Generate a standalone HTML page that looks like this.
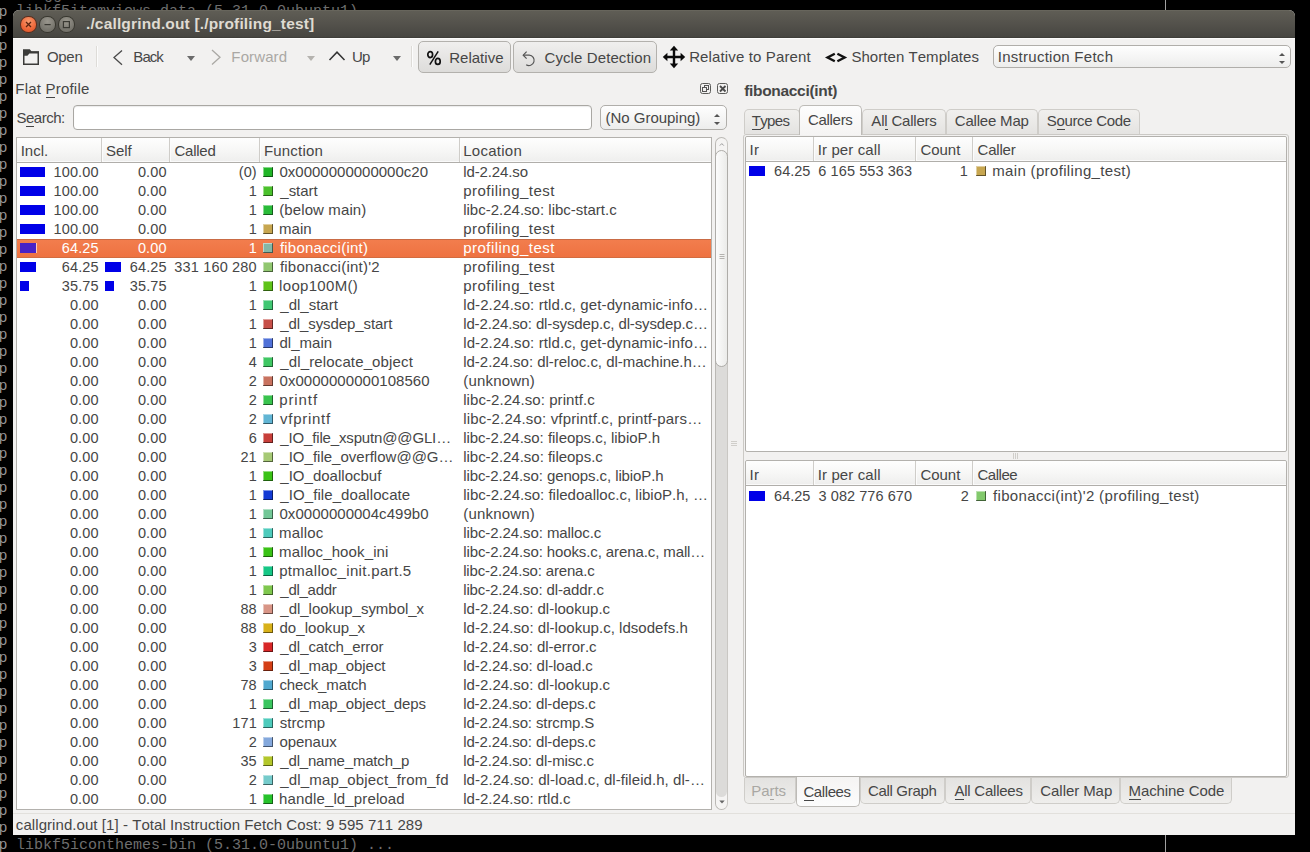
<!DOCTYPE html>
<html><head><meta charset="utf-8"><title>callgrind</title>
<style>
*{box-sizing:border-box;margin:0;padding:0}
html,body{width:1310px;height:852px;overflow:hidden;background:#000}
body{font-family:"Liberation Sans",sans-serif;font-size:15px;color:#464646;position:relative;font-kerning:none}
.abs,.t{position:absolute;white-space:nowrap}
.t{line-height:20px;height:20px}
.term{position:absolute;font-family:"Liberation Mono",monospace;color:#6e6e6e;font-size:15px;line-height:17px;white-space:pre}
#win{position:absolute;left:13px;top:10px;width:1282px;height:825px;background:#f2f1f0;border-radius:6px 6px 0 0;overflow:hidden}
#title{position:absolute;left:0;top:0;width:100%;height:28px;background:linear-gradient(#5f5d55 0%,#53514b 50%,#474641 94%,#3b3a36 100%);border-top:1px solid #67655c;box-shadow:0 1px 0 #fbfbfa}
.hdr{position:absolute;background:linear-gradient(#fefefe 0%,#f7f7f6 50%,#eeeeed 100%);border-bottom:1px solid #b0aeaa;box-shadow:inset 0 -1px 0 #fafafa}
.sep{position:absolute;width:1px;background:#cfcdc9;box-shadow:1px 0 0 #fcfcfc}
.frame{position:absolute;background:#fff;border:1px solid #b3b1ad;border-radius:2px}
.sq{position:absolute;width:10px;height:10px;box-shadow:inset -1px -1px 0 rgba(0,0,0,.5), inset 1px 1px 0 rgba(255,255,255,.45)}
.bar{position:absolute;height:10px;background:#0000e8}
.tab{position:absolute;border:1px solid #cfcdc9;border-bottom:none;background:linear-gradient(#f1f0ee,#e4e3e1);border-radius:5px 5px 0 0}
.tabb{position:absolute;border:1px solid #cfcdc9;border-top:none;background:linear-gradient(#e3e2e0,#efeeec);border-radius:0 0 5px 5px}
.btn{position:absolute;border:1px solid #b3b1ad;border-radius:5px;background:linear-gradient(#f0efee,#dddcda)}
.combo{position:absolute;border:1px solid #b0aeaa;border-radius:5px;background:linear-gradient(#fefefe,#ededec)}
.tri{position:absolute;width:0;height:0;border-left:4px solid transparent;border-right:4px solid transparent}
svg{position:absolute;overflow:visible}
</style></head><body>

<div class="term" style="left:16px;top:3px">libkf5itemviews-data (5.31.0-0ubuntu1)</div>
<div class="term" style="left:44px;top:-13px">gg</div>
<div class="term" style="left:16px;top:837px">libkf5iconthemes-bin (5.31.0-0ubuntu1) ...</div>
<div class="term" style="left:-1.5px;top:4px;color:#969696">p</div>
<div class="term" style="left:-1.5px;top:21px;color:#969696">p</div>
<div class="term" style="left:-1.5px;top:38px;color:#969696">p</div>
<div class="term" style="left:-1.5px;top:55px;color:#969696">p</div>
<div class="term" style="left:-1.5px;top:72px;color:#969696">p</div>
<div class="term" style="left:-1.5px;top:89px;color:#969696">p</div>
<div class="term" style="left:-1.5px;top:106px;color:#969696">p</div>
<div class="term" style="left:-1.5px;top:123px;color:#969696">p</div>
<div class="term" style="left:-1.5px;top:140px;color:#969696">p</div>
<div class="term" style="left:-1.5px;top:157px;color:#969696">p</div>
<div class="term" style="left:-1.5px;top:174px;color:#969696">p</div>
<div class="term" style="left:-1.5px;top:191px;color:#969696">p</div>
<div class="term" style="left:-1.5px;top:208px;color:#969696">p</div>
<div class="term" style="left:-1.5px;top:225px;color:#969696">p</div>
<div class="term" style="left:-1.5px;top:242px;color:#969696">p</div>
<div class="term" style="left:-1.5px;top:259px;color:#969696">p</div>
<div class="term" style="left:-1.5px;top:276px;color:#969696">p</div>
<div class="term" style="left:-1.5px;top:293px;color:#969696">p</div>
<div class="term" style="left:-1.5px;top:310px;color:#969696">p</div>
<div class="term" style="left:-1.5px;top:327px;color:#969696">p</div>
<div class="term" style="left:-1.5px;top:344px;color:#969696">p</div>
<div class="term" style="left:-1.5px;top:361px;color:#969696">p</div>
<div class="term" style="left:-1.5px;top:378px;color:#969696">p</div>
<div class="term" style="left:-1.5px;top:395px;color:#969696">p</div>
<div class="term" style="left:-1.5px;top:412px;color:#969696">p</div>
<div class="term" style="left:-1.5px;top:429px;color:#969696">p</div>
<div class="term" style="left:-1.5px;top:446px;color:#969696">p</div>
<div class="term" style="left:-1.5px;top:463px;color:#969696">p</div>
<div class="term" style="left:-1.5px;top:480px;color:#969696">p</div>
<div class="term" style="left:-1.5px;top:497px;color:#969696">p</div>
<div class="term" style="left:-1.5px;top:514px;color:#969696">p</div>
<div class="term" style="left:-1.5px;top:531px;color:#969696">p</div>
<div class="term" style="left:-1.5px;top:548px;color:#969696">p</div>
<div class="term" style="left:-1.5px;top:565px;color:#969696">p</div>
<div class="term" style="left:-1.5px;top:582px;color:#969696">p</div>
<div class="term" style="left:-1.5px;top:599px;color:#969696">p</div>
<div class="term" style="left:-1.5px;top:616px;color:#969696">p</div>
<div class="term" style="left:-1.5px;top:633px;color:#969696">p</div>
<div class="term" style="left:-1.5px;top:650px;color:#969696">p</div>
<div class="term" style="left:-1.5px;top:667px;color:#969696">p</div>
<div class="term" style="left:-1.5px;top:684px;color:#969696">p</div>
<div class="term" style="left:-1.5px;top:701px;color:#969696">p</div>
<div class="term" style="left:-1.5px;top:718px;color:#969696">p</div>
<div class="term" style="left:-1.5px;top:735px;color:#969696">p</div>
<div class="term" style="left:-1.5px;top:752px;color:#969696">p</div>
<div class="term" style="left:-1.5px;top:769px;color:#969696">p</div>
<div class="term" style="left:-1.5px;top:786px;color:#969696">p</div>
<div class="term" style="left:-1.5px;top:803px;color:#969696">p</div>
<div class="term" style="left:-1.5px;top:820px;color:#969696">p</div>
<div class="term" style="left:-1.5px;top:837px;color:#969696">p</div>
<div class="abs" style="left:1165px;top:0;width:1px;height:11px;background:#a0a0a0"></div>
<div class="abs" style="left:1165px;top:835px;width:1px;height:17px;background:#a0a0a0"></div>
<div id="win"><div id="title"></div></div>
<div class="abs" style="left:21.3px;top:17.2px;width:14.4px;height:14.4px;border-radius:50%;background:radial-gradient(circle at 50% 30%,#f79a6e 0%,#ee6a3c 55%,#dc4c20 100%);box-shadow:0 0 0 1px #5e2c1a"></div>
<div class="abs" style="left:40.4px;top:17.2px;width:14.4px;height:14.4px;border-radius:50%;background:radial-gradient(circle at 50% 30%,#99968d 0%,#7c7a72 55%,#68665e 100%);box-shadow:0 0 0 1px #38372f"></div>
<div class="abs" style="left:59.2px;top:17.2px;width:14.4px;height:14.4px;border-radius:50%;background:radial-gradient(circle at 50% 30%,#99968d 0%,#7c7a72 55%,#68665e 100%);box-shadow:0 0 0 1px #38372f"></div>
<svg style="left:0;top:0" width="100" height="40"><g stroke="#5a2410" stroke-width="1.3" fill="none"><path d="M26 22 L31 27 M31 22 L26 27"/></g><g stroke="#3a3933" stroke-width="1.2" fill="none"><path d="M44.5 24.6 H50.7"/><rect x="63.4" y="21.6" width="6" height="6"/></g></svg>
<div class="t" style="left:85.95px;top:13.63px;font-size:15.5px;letter-spacing:0.158px;color:#dfdbd2;font-weight:bold">./callgrind.out [./profiling_test]</div>
<svg style="left:23px;top:49px" width="16" height="16"><rect x="0.75" y="3" width="14.5" height="12.25" fill="none" stroke="#3b3b39" stroke-width="1.5"/><path d="M0 0.2 H6.8 L8.6 2.4 H16 V4.6 H6.4 L4.4 6.7 H0 Z" fill="#3b3b39"/></svg>
<div class="t" style="left:46.89px;top:46.80px;font-size:15px;letter-spacing:-0.270px">Open</div>
<div class="sep" style="left:96px;top:46px;height:21px;background:#dedcd8"></div>
<svg style="left:0;top:0" width="420" height="80" fill="none" stroke-width="1.3"><path d="M122 50.5 L114 57.6 L122 64.7" stroke="#4a4a4a"/><path d="M212 50 L220 57.2 L212 64.4" stroke="#aaa8a4"/><path d="M329.5 60 L337 52.2 L344.5 60" stroke="#333" stroke-width="1.5"/></svg>
<div class="t" style="left:133.37px;top:46.80px;font-size:15px;letter-spacing:-0.980px">Back</div>
<div class="tri" style="left:186.6px;top:56.4px;border-top:5px solid #6b6b6b"></div>
<div class="t" style="left:231.37px;top:46.80px;font-size:15px;letter-spacing:0.114px;color:#aaa8a4">Forward</div>
<div class="tri" style="left:307.3px;top:56.4px;border-top:5px solid #b5b3af"></div>
<div class="t" style="left:352.04px;top:46.80px;font-size:15px;letter-spacing:-0.888px">Up</div>
<div class="tri" style="left:392.6px;top:56.4px;border-top:5px solid #6b6b6b"></div>
<div class="sep" style="left:411px;top:46px;height:21px;background:#dedcd8"></div>
<div class="btn" style="left:418px;top:41px;width:93px;height:32px"></div>
<div class="btn" style="left:513px;top:41px;width:144px;height:32px"></div>
<svg style="left:426px;top:50px" width="17" height="16"><g fill="none" stroke="#111" stroke-width="1.7"><ellipse cx="4.2" cy="4.6" rx="2.4" ry="3"/><ellipse cx="11.8" cy="11.4" rx="2.4" ry="3"/><path d="M12.2 1.4 L3.8 14.6" stroke-width="1.5"/></g></svg>
<div class="t" style="left:449.17px;top:47.80px;font-size:15px;letter-spacing:0.029px">Relative</div>
<svg style="left:522px;top:50px" width="15" height="17"><g fill="none" stroke="#555" stroke-width="1.2"><path d="M1.2 5.2 H7.2 A5.2 5.2 0 1 1 4.2 14.8"/><path d="M4.6 1.6 L1.2 5.2 L4.6 8.6"/></g></svg>
<div class="t" style="left:544.44px;top:47.80px;font-size:15px;letter-spacing:0.107px">Cycle Detection</div>
<svg style="left:663px;top:46px" width="22" height="22"><g fill="none" stroke="#0a0a0a" stroke-width="2.4"><path d="M11 2 V20 M2 11 H20"/></g><g fill="#0a0a0a"><path d="M11 -0.2 L15.2 4.4 H6.8 Z M11 22.2 L15.2 17.6 H6.8 Z M-0.2 11 L4.4 6.8 V15.2 Z M22.2 11 L17.6 6.8 V15.2 Z"/></g></svg>
<div class="t" style="left:689.17px;top:46.80px;font-size:15px;letter-spacing:0.136px">Relative to Parent</div>
<svg style="left:0;top:0" width="860" height="70"><g fill="none" stroke="#111" stroke-width="2.4"><path d="M834.8 53.8 L827.6 57.5 L834.8 61.2"/><path d="M837.4 53.8 L844.6 57.5 L837.4 61.2"/></g></svg>
<div class="t" style="left:851.42px;top:46.80px;font-size:15px;letter-spacing:0.050px">Shorten Templates</div>
<div class="combo" style="left:993px;top:45px;width:298px;height:23px"></div>
<div class="t" style="left:997.72px;top:46.80px;font-size:15px;letter-spacing:0.274px">Instruction Fetch</div>
<div class="tri" style="left:1278.5px;top:53px;border-left-width:3px;border-right-width:3px;border-bottom:3.5px solid #555"></div>
<div class="tri" style="left:1278.5px;top:61.4px;border-left-width:3px;border-right-width:3px;border-top:3.5px solid #555"></div>
<div class="t" style="left:15.37px;top:78.80px;font-size:15px;letter-spacing:0.201px">Flat Profile</div>
<div class="abs" style="left:45.8px;top:97px;width:9.7px;height:1px;background:#464646"></div>
<svg style="left:700px;top:83px" width="30" height="12"><g fill="none" stroke="#5c5c5a" stroke-width="1"><rect x="0.5" y="0.5" width="10" height="10" rx="2"/><rect x="17.5" y="0.5" width="10" height="10" rx="2"/><rect x="4.5" y="2.5" width="4" height="4" stroke="#555"/><rect x="2.5" y="4.5" width="4" height="4" fill="#f2f1f0" stroke="#555"/></g><path d="M20 3 L25.5 8.5 M25.5 3 L20 8.5" stroke="#4a4a4a" stroke-width="1.8" fill="none"/></svg>
<div class="t" style="left:16.42px;top:107.80px;font-size:15px;letter-spacing:-0.474px">Search:</div>
<div class="abs" style="left:26.2px;top:126px;width:8.0px;height:1px;background:#464646"></div>
<div class="abs" style="left:73px;top:105px;width:519px;height:25px;background:#fff;border:1px solid #a9a7a3;border-radius:4px;box-shadow:inset 0 1px 1px rgba(0,0,0,.08)"></div>
<div class="combo" style="left:600px;top:105px;width:127px;height:25px"></div>
<div class="t" style="left:605.47px;top:107.80px;font-size:15px;letter-spacing:-0.015px">(No Grouping)</div>
<div class="tri" style="left:714.3px;top:114px;border-left-width:3px;border-right-width:3px;border-bottom:3.5px solid #555"></div>
<div class="tri" style="left:714.3px;top:122.4px;border-left-width:3px;border-right-width:3px;border-top:3.5px solid #555"></div>
<div class="frame" style="left:16px;top:137px;width:696px;height:673px;border-radius:0"></div>
<div class="hdr" style="left:17px;top:138px;width:694px;height:25px"></div>
<div class="sep" style="left:101px;top:138px;height:24px"></div>
<div class="sep" style="left:169px;top:138px;height:24px"></div>
<div class="sep" style="left:259px;top:138px;height:24px"></div>
<div class="sep" style="left:459px;top:138px;height:24px"></div>
<div class="t" style="left:20.72px;top:140.80px;font-size:15px;letter-spacing:-0.014px">Incl.</div>
<div class="t" style="left:106.02px;top:140.80px;font-size:15px;letter-spacing:-0.063px">Self</div>
<div class="t" style="left:174.44px;top:140.80px;font-size:15px;letter-spacing:-0.239px">Called</div>
<div class="t" style="left:263.97px;top:140.80px;font-size:15px;letter-spacing:0.182px">Function</div>
<div class="t" style="left:463.27px;top:140.80px;font-size:15px;letter-spacing:0.256px">Location</div>
<div class="bar" style="left:20px;top:167px;width:25px"></div>
<div class="t" style="left:53.47px;top:161.98px;font-size:14.5px;letter-spacing:0.150px">100.00</div>
<div class="t" style="left:137.90px;top:161.98px;font-size:14.5px;letter-spacing:0.150px">0.00</div>
<div class="t" style="left:238.68px;top:161.98px;font-size:14.5px;letter-spacing:0.150px">(0)</div>
<div class="sq" style="left:263px;top:167px;background:#21b527"></div>
<div class="t" style="left:279.51px;top:161.80px;font-size:15px;letter-spacing:-0.000px">0x0000000000000c20</div>
<div class="t" style="left:463.19px;top:161.80px;font-size:15px;letter-spacing:-0.115px">ld-2.24.so</div>
<div class="bar" style="left:20px;top:186px;width:25px"></div>
<div class="t" style="left:53.47px;top:180.98px;font-size:14.5px;letter-spacing:0.150px">100.00</div>
<div class="t" style="left:137.90px;top:180.98px;font-size:14.5px;letter-spacing:0.150px">0.00</div>
<div class="t" style="left:248.64px;top:180.98px;font-size:14.5px;letter-spacing:0.150px">1</div>
<div class="sq" style="left:263px;top:186px;background:#4bc12d"></div>
<div class="t" style="left:280.33px;top:180.80px;font-size:15px;letter-spacing:-0.026px">_start</div>
<div class="t" style="left:463.23px;top:180.80px;font-size:15px;letter-spacing:0.471px">profiling_test</div>
<div class="bar" style="left:20px;top:205px;width:25px"></div>
<div class="t" style="left:53.47px;top:199.98px;font-size:14.5px;letter-spacing:0.150px">100.00</div>
<div class="t" style="left:137.90px;top:199.98px;font-size:14.5px;letter-spacing:0.150px">0.00</div>
<div class="t" style="left:248.64px;top:199.98px;font-size:14.5px;letter-spacing:0.150px">1</div>
<div class="sq" style="left:263px;top:205px;background:#2abb39"></div>
<div class="t" style="left:279.17px;top:199.80px;font-size:15px;letter-spacing:0.118px">(below main)</div>
<div class="t" style="left:463.19px;top:199.80px;font-size:15px;letter-spacing:0.005px">libc-2.24.so: libc-start.c</div>
<div class="bar" style="left:20px;top:224px;width:25px"></div>
<div class="t" style="left:53.47px;top:218.98px;font-size:14.5px;letter-spacing:0.150px">100.00</div>
<div class="t" style="left:137.90px;top:218.98px;font-size:14.5px;letter-spacing:0.150px">0.00</div>
<div class="t" style="left:248.64px;top:218.98px;font-size:14.5px;letter-spacing:0.150px">1</div>
<div class="sq" style="left:263px;top:224px;background:#c7a650"></div>
<div class="t" style="left:279.10px;top:218.80px;font-size:15px;letter-spacing:0.019px">main</div>
<div class="t" style="left:463.23px;top:218.80px;font-size:15px;letter-spacing:0.471px">profiling_test</div>
<div class="abs" style="left:17px;top:239px;width:694px;height:19px;background:linear-gradient(#f27d4d,#ee7241);border-top:1px solid #c96b45;border-bottom:1px solid #d26c40"></div>
<div class="bar" style="left:20px;top:243px;width:16px;background:#4822c6;box-shadow:1px 0 0 rgba(255,225,210,.8)"></div>
<div class="t" style="left:61.72px;top:237.98px;font-size:14.5px;letter-spacing:0.150px;color:#fff">64.25</div>
<div class="t" style="left:137.90px;top:237.98px;font-size:14.5px;letter-spacing:0.150px;color:#fff">0.00</div>
<div class="t" style="left:248.64px;top:237.98px;font-size:14.5px;letter-spacing:0.150px;color:#fff">1</div>
<div class="sq" style="left:263px;top:243px;background:#84b7a6"></div>
<div class="t" style="left:279.89px;top:237.80px;font-size:15px;letter-spacing:0.231px;color:#fff">fibonacci(int)</div>
<div class="t" style="left:463.23px;top:237.80px;font-size:15px;letter-spacing:0.471px;color:#fff">profiling_test</div>
<div class="bar" style="left:20px;top:262px;width:16px"></div>
<div class="bar" style="left:105px;top:262px;width:16px"></div>
<div class="t" style="left:61.72px;top:256.98px;font-size:14.5px;letter-spacing:0.150px">64.25</div>
<div class="t" style="left:129.72px;top:256.98px;font-size:14.5px;letter-spacing:0.150px">64.25</div>
<div class="t" style="left:174.35px;top:256.98px;font-size:14.5px;letter-spacing:0.158px">331 160 280</div>
<div class="sq" style="left:263px;top:262px;background:#91c770"></div>
<div class="t" style="left:279.89px;top:256.80px;font-size:15px;letter-spacing:0.235px">fibonacci(int)'2</div>
<div class="t" style="left:463.23px;top:256.80px;font-size:15px;letter-spacing:0.471px">profiling_test</div>
<div class="bar" style="left:20px;top:281px;width:9px"></div>
<div class="bar" style="left:105px;top:281px;width:9px"></div>
<div class="t" style="left:61.72px;top:275.98px;font-size:14.5px;letter-spacing:0.150px">35.75</div>
<div class="t" style="left:129.72px;top:275.98px;font-size:14.5px;letter-spacing:0.150px">35.75</div>
<div class="t" style="left:248.64px;top:275.98px;font-size:14.5px;letter-spacing:0.150px">1</div>
<div class="sq" style="left:263px;top:281px;background:#5fc318"></div>
<div class="t" style="left:279.09px;top:275.80px;font-size:15px;letter-spacing:0.319px">loop100M()</div>
<div class="t" style="left:463.23px;top:275.80px;font-size:15px;letter-spacing:0.471px">profiling_test</div>
<div class="t" style="left:69.90px;top:294.98px;font-size:14.5px;letter-spacing:0.150px">0.00</div>
<div class="t" style="left:137.90px;top:294.98px;font-size:14.5px;letter-spacing:0.150px">0.00</div>
<div class="t" style="left:248.64px;top:294.98px;font-size:14.5px;letter-spacing:0.150px">1</div>
<div class="sq" style="left:263px;top:300px;background:#40c772"></div>
<div class="t" style="left:280.33px;top:294.80px;font-size:15px;letter-spacing:-0.006px">_dl_start</div>
<div class="t" style="left:463.19px;top:294.80px;font-size:15px;letter-spacing:0.106px">ld-2.24.so: rtld.c, get-dynamic-info…</div>
<div class="t" style="left:69.90px;top:313.98px;font-size:14.5px;letter-spacing:0.150px">0.00</div>
<div class="t" style="left:137.90px;top:313.98px;font-size:14.5px;letter-spacing:0.150px">0.00</div>
<div class="t" style="left:248.64px;top:313.98px;font-size:14.5px;letter-spacing:0.150px">1</div>
<div class="sq" style="left:263px;top:319px;background:#c75049"></div>
<div class="t" style="left:280.33px;top:313.80px;font-size:15px;letter-spacing:-0.095px">_dl_sysdep_start</div>
<div class="t" style="left:463.19px;top:313.80px;font-size:15px;letter-spacing:-0.126px">ld-2.24.so: dl-sysdep.c, dl-sysdep.c…</div>
<div class="t" style="left:69.90px;top:332.98px;font-size:14.5px;letter-spacing:0.150px">0.00</div>
<div class="t" style="left:137.90px;top:332.98px;font-size:14.5px;letter-spacing:0.150px">0.00</div>
<div class="t" style="left:248.64px;top:332.98px;font-size:14.5px;letter-spacing:0.150px">1</div>
<div class="sq" style="left:263px;top:338px;background:#5071d8"></div>
<div class="t" style="left:279.47px;top:332.80px;font-size:15px;letter-spacing:0.029px">dl_main</div>
<div class="t" style="left:463.19px;top:332.80px;font-size:15px;letter-spacing:0.106px">ld-2.24.so: rtld.c, get-dynamic-info…</div>
<div class="t" style="left:69.90px;top:351.98px;font-size:14.5px;letter-spacing:0.150px">0.00</div>
<div class="t" style="left:137.90px;top:351.98px;font-size:14.5px;letter-spacing:0.150px">0.00</div>
<div class="t" style="left:248.64px;top:351.98px;font-size:14.5px;letter-spacing:0.150px">4</div>
<div class="sq" style="left:263px;top:357px;background:#3fc763"></div>
<div class="t" style="left:280.33px;top:351.80px;font-size:15px;letter-spacing:0.133px">_dl_relocate_object</div>
<div class="t" style="left:463.19px;top:351.80px;font-size:15px;letter-spacing:-0.017px">ld-2.24.so: dl-reloc.c, dl-machine.h…</div>
<div class="t" style="left:69.90px;top:370.98px;font-size:14.5px;letter-spacing:0.150px">0.00</div>
<div class="t" style="left:137.90px;top:370.98px;font-size:14.5px;letter-spacing:0.150px">0.00</div>
<div class="t" style="left:248.64px;top:370.98px;font-size:14.5px;letter-spacing:0.150px">2</div>
<div class="sq" style="left:263px;top:376px;background:#c8725f"></div>
<div class="t" style="left:279.51px;top:370.80px;font-size:15px;letter-spacing:0.044px">0x0000000000108560</div>
<div class="t" style="left:463.27px;top:370.80px;font-size:15px;letter-spacing:0.178px">(unknown)</div>
<div class="t" style="left:69.90px;top:389.98px;font-size:14.5px;letter-spacing:0.150px">0.00</div>
<div class="t" style="left:137.90px;top:389.98px;font-size:14.5px;letter-spacing:0.150px">0.00</div>
<div class="t" style="left:248.64px;top:389.98px;font-size:14.5px;letter-spacing:0.150px">2</div>
<div class="sq" style="left:263px;top:395px;background:#39c34e"></div>
<div class="t" style="left:279.13px;top:389.80px;font-size:15px;letter-spacing:0.920px">printf</div>
<div class="t" style="left:463.19px;top:389.80px;font-size:15px;letter-spacing:0.069px">libc-2.24.so: printf.c</div>
<div class="t" style="left:69.90px;top:408.98px;font-size:14.5px;letter-spacing:0.150px">0.00</div>
<div class="t" style="left:137.90px;top:408.98px;font-size:14.5px;letter-spacing:0.150px">0.00</div>
<div class="t" style="left:248.64px;top:408.98px;font-size:14.5px;letter-spacing:0.150px">2</div>
<div class="sq" style="left:263px;top:414px;background:#61b5d4"></div>
<div class="t" style="left:280.05px;top:408.80px;font-size:15px;letter-spacing:0.716px">vfprintf</div>
<div class="t" style="left:463.19px;top:408.80px;font-size:15px;letter-spacing:0.172px">libc-2.24.so: vfprintf.c, printf-pars…</div>
<div class="t" style="left:69.90px;top:427.98px;font-size:14.5px;letter-spacing:0.150px">0.00</div>
<div class="t" style="left:137.90px;top:427.98px;font-size:14.5px;letter-spacing:0.150px">0.00</div>
<div class="t" style="left:248.64px;top:427.98px;font-size:14.5px;letter-spacing:0.150px">6</div>
<div class="sq" style="left:263px;top:433px;background:#c73f3a"></div>
<div class="t" style="left:280.33px;top:427.80px;font-size:15px;letter-spacing:-0.153px">_IO_file_xsputn@@GLI…</div>
<div class="t" style="left:463.19px;top:427.80px;font-size:15px;letter-spacing:-0.025px">libc-2.24.so: fileops.c, libioP.h</div>
<div class="t" style="left:69.90px;top:446.98px;font-size:14.5px;letter-spacing:0.150px">0.00</div>
<div class="t" style="left:137.90px;top:446.98px;font-size:14.5px;letter-spacing:0.150px">0.00</div>
<div class="t" style="left:240.42px;top:446.98px;font-size:14.5px;letter-spacing:0.150px">21</div>
<div class="sq" style="left:263px;top:452px;background:#a6c975"></div>
<div class="t" style="left:280.33px;top:446.80px;font-size:15px;letter-spacing:0.010px">_IO_file_overflow@@G…</div>
<div class="t" style="left:463.19px;top:446.80px;font-size:15px;letter-spacing:-0.021px">libc-2.24.so: fileops.c</div>
<div class="t" style="left:69.90px;top:465.98px;font-size:14.5px;letter-spacing:0.150px">0.00</div>
<div class="t" style="left:137.90px;top:465.98px;font-size:14.5px;letter-spacing:0.150px">0.00</div>
<div class="t" style="left:248.64px;top:465.98px;font-size:14.5px;letter-spacing:0.150px">1</div>
<div class="sq" style="left:263px;top:471px;background:#3ac216"></div>
<div class="t" style="left:280.33px;top:465.80px;font-size:15px;letter-spacing:0.011px">_IO_doallocbuf</div>
<div class="t" style="left:463.19px;top:465.80px;font-size:15px;letter-spacing:-0.096px">libc-2.24.so: genops.c, libioP.h</div>
<div class="t" style="left:69.90px;top:484.98px;font-size:14.5px;letter-spacing:0.150px">0.00</div>
<div class="t" style="left:137.90px;top:484.98px;font-size:14.5px;letter-spacing:0.150px">0.00</div>
<div class="t" style="left:248.64px;top:484.98px;font-size:14.5px;letter-spacing:0.150px">1</div>
<div class="sq" style="left:263px;top:490px;background:#133ad4"></div>
<div class="t" style="left:280.33px;top:484.80px;font-size:15px;letter-spacing:0.079px">_IO_file_doallocate</div>
<div class="t" style="left:463.19px;top:484.80px;font-size:15px;letter-spacing:0.012px">libc-2.24.so: filedoalloc.c, libioP.h, …</div>
<div class="t" style="left:69.90px;top:503.98px;font-size:14.5px;letter-spacing:0.150px">0.00</div>
<div class="t" style="left:137.90px;top:503.98px;font-size:14.5px;letter-spacing:0.150px">0.00</div>
<div class="t" style="left:248.64px;top:503.98px;font-size:14.5px;letter-spacing:0.150px">1</div>
<div class="sq" style="left:263px;top:509px;background:#72c797"></div>
<div class="t" style="left:279.51px;top:503.80px;font-size:15px;letter-spacing:0.029px">0x0000000004c499b0</div>
<div class="t" style="left:463.27px;top:503.80px;font-size:15px;letter-spacing:0.178px">(unknown)</div>
<div class="t" style="left:69.90px;top:522.98px;font-size:14.5px;letter-spacing:0.150px">0.00</div>
<div class="t" style="left:137.90px;top:522.98px;font-size:14.5px;letter-spacing:0.150px">0.00</div>
<div class="t" style="left:248.64px;top:522.98px;font-size:14.5px;letter-spacing:0.150px">1</div>
<div class="sq" style="left:263px;top:528px;background:#4ecbbc"></div>
<div class="t" style="left:279.10px;top:522.80px;font-size:15px;letter-spacing:0.169px">malloc</div>
<div class="t" style="left:463.19px;top:522.80px;font-size:15px;letter-spacing:-0.093px">libc-2.24.so: malloc.c</div>
<div class="t" style="left:69.90px;top:541.98px;font-size:14.5px;letter-spacing:0.150px">0.00</div>
<div class="t" style="left:137.90px;top:541.98px;font-size:14.5px;letter-spacing:0.150px">0.00</div>
<div class="t" style="left:248.64px;top:541.98px;font-size:14.5px;letter-spacing:0.150px">1</div>
<div class="sq" style="left:263px;top:547px;background:#3ac216"></div>
<div class="t" style="left:279.10px;top:541.80px;font-size:15px;letter-spacing:0.125px">malloc_hook_ini</div>
<div class="t" style="left:463.19px;top:541.80px;font-size:15px;letter-spacing:-0.105px">libc-2.24.so: hooks.c, arena.c, mall…</div>
<div class="t" style="left:69.90px;top:560.98px;font-size:14.5px;letter-spacing:0.150px">0.00</div>
<div class="t" style="left:137.90px;top:560.98px;font-size:14.5px;letter-spacing:0.150px">0.00</div>
<div class="t" style="left:248.64px;top:560.98px;font-size:14.5px;letter-spacing:0.150px">1</div>
<div class="sq" style="left:263px;top:566px;background:#16c786"></div>
<div class="t" style="left:279.13px;top:560.80px;font-size:15px;letter-spacing:0.326px">ptmalloc_init.part.5</div>
<div class="t" style="left:463.19px;top:560.80px;font-size:15px;letter-spacing:-0.178px">libc-2.24.so: arena.c</div>
<div class="t" style="left:69.90px;top:579.98px;font-size:14.5px;letter-spacing:0.150px">0.00</div>
<div class="t" style="left:137.90px;top:579.98px;font-size:14.5px;letter-spacing:0.150px">0.00</div>
<div class="t" style="left:248.64px;top:579.98px;font-size:14.5px;letter-spacing:0.150px">1</div>
<div class="sq" style="left:263px;top:585px;background:#7fc74e"></div>
<div class="t" style="left:280.33px;top:579.80px;font-size:15px;letter-spacing:-0.280px">_dl_addr</div>
<div class="t" style="left:463.19px;top:579.80px;font-size:15px;letter-spacing:-0.122px">libc-2.24.so: dl-addr.c</div>
<div class="t" style="left:69.90px;top:598.98px;font-size:14.5px;letter-spacing:0.150px">0.00</div>
<div class="t" style="left:137.90px;top:598.98px;font-size:14.5px;letter-spacing:0.150px">0.00</div>
<div class="t" style="left:240.42px;top:598.98px;font-size:14.5px;letter-spacing:0.150px">88</div>
<div class="sq" style="left:263px;top:604px;background:#d89586"></div>
<div class="t" style="left:280.33px;top:598.80px;font-size:15px;letter-spacing:-0.029px">_dl_lookup_symbol_x</div>
<div class="t" style="left:463.19px;top:598.80px;font-size:15px;letter-spacing:0.007px">ld-2.24.so: dl-lookup.c</div>
<div class="t" style="left:69.90px;top:617.98px;font-size:14.5px;letter-spacing:0.150px">0.00</div>
<div class="t" style="left:137.90px;top:617.98px;font-size:14.5px;letter-spacing:0.150px">0.00</div>
<div class="t" style="left:240.42px;top:617.98px;font-size:14.5px;letter-spacing:0.150px">88</div>
<div class="sq" style="left:263px;top:623px;background:#d8b11a"></div>
<div class="t" style="left:279.47px;top:617.80px;font-size:15px;letter-spacing:0.052px">do_lookup_x</div>
<div class="t" style="left:463.19px;top:617.80px;font-size:15px;letter-spacing:0.033px">ld-2.24.so: dl-lookup.c, ldsodefs.h</div>
<div class="t" style="left:69.90px;top:636.98px;font-size:14.5px;letter-spacing:0.150px">0.00</div>
<div class="t" style="left:137.90px;top:636.98px;font-size:14.5px;letter-spacing:0.150px">0.00</div>
<div class="t" style="left:248.64px;top:636.98px;font-size:14.5px;letter-spacing:0.150px">3</div>
<div class="sq" style="left:263px;top:642px;background:#d82727"></div>
<div class="t" style="left:280.33px;top:636.80px;font-size:15px;letter-spacing:-0.072px">_dl_catch_error</div>
<div class="t" style="left:463.19px;top:636.80px;font-size:15px;letter-spacing:-0.039px">ld-2.24.so: dl-error.c</div>
<div class="t" style="left:69.90px;top:655.98px;font-size:14.5px;letter-spacing:0.150px">0.00</div>
<div class="t" style="left:137.90px;top:655.98px;font-size:14.5px;letter-spacing:0.150px">0.00</div>
<div class="t" style="left:248.64px;top:655.98px;font-size:14.5px;letter-spacing:0.150px">3</div>
<div class="sq" style="left:263px;top:661px;background:#d43f16"></div>
<div class="t" style="left:280.33px;top:655.80px;font-size:15px;letter-spacing:-0.056px">_dl_map_object</div>
<div class="t" style="left:463.19px;top:655.80px;font-size:15px;letter-spacing:-0.065px">ld-2.24.so: dl-load.c</div>
<div class="t" style="left:69.90px;top:674.98px;font-size:14.5px;letter-spacing:0.150px">0.00</div>
<div class="t" style="left:137.90px;top:674.98px;font-size:14.5px;letter-spacing:0.150px">0.00</div>
<div class="t" style="left:240.42px;top:674.98px;font-size:14.5px;letter-spacing:0.150px">78</div>
<div class="sq" style="left:263px;top:680px;background:#50a8cf"></div>
<div class="t" style="left:279.46px;top:674.80px;font-size:15px;letter-spacing:-0.116px">check_match</div>
<div class="t" style="left:463.19px;top:674.80px;font-size:15px;letter-spacing:0.007px">ld-2.24.so: dl-lookup.c</div>
<div class="t" style="left:69.90px;top:693.98px;font-size:14.5px;letter-spacing:0.150px">0.00</div>
<div class="t" style="left:137.90px;top:693.98px;font-size:14.5px;letter-spacing:0.150px">0.00</div>
<div class="t" style="left:248.64px;top:693.98px;font-size:14.5px;letter-spacing:0.150px">1</div>
<div class="sq" style="left:263px;top:699px;background:#3ac55f"></div>
<div class="t" style="left:280.33px;top:693.80px;font-size:15px;letter-spacing:-0.059px">_dl_map_object_deps</div>
<div class="t" style="left:463.19px;top:693.80px;font-size:15px;letter-spacing:-0.123px">ld-2.24.so: dl-deps.c</div>
<div class="t" style="left:69.90px;top:712.98px;font-size:14.5px;letter-spacing:0.150px">0.00</div>
<div class="t" style="left:137.90px;top:712.98px;font-size:14.5px;letter-spacing:0.150px">0.00</div>
<div class="t" style="left:232.21px;top:712.98px;font-size:14.5px;letter-spacing:0.150px">171</div>
<div class="sq" style="left:263px;top:718px;background:#4ecbbc"></div>
<div class="t" style="left:279.68px;top:712.80px;font-size:15px;letter-spacing:0.089px">strcmp</div>
<div class="t" style="left:463.19px;top:712.80px;font-size:15px;letter-spacing:-0.120px">ld-2.24.so: strcmp.S</div>
<div class="t" style="left:69.90px;top:731.98px;font-size:14.5px;letter-spacing:0.150px">0.00</div>
<div class="t" style="left:137.90px;top:731.98px;font-size:14.5px;letter-spacing:0.150px">0.00</div>
<div class="t" style="left:248.64px;top:731.98px;font-size:14.5px;letter-spacing:0.150px">2</div>
<div class="sq" style="left:263px;top:737px;background:#84a8dc"></div>
<div class="t" style="left:279.47px;top:731.80px;font-size:15px;letter-spacing:-0.060px">openaux</div>
<div class="t" style="left:463.19px;top:731.80px;font-size:15px;letter-spacing:-0.123px">ld-2.24.so: dl-deps.c</div>
<div class="t" style="left:69.90px;top:750.98px;font-size:14.5px;letter-spacing:0.150px">0.00</div>
<div class="t" style="left:137.90px;top:750.98px;font-size:14.5px;letter-spacing:0.150px">0.00</div>
<div class="t" style="left:240.42px;top:750.98px;font-size:14.5px;letter-spacing:0.150px">35</div>
<div class="sq" style="left:263px;top:756px;background:#b3c72b"></div>
<div class="t" style="left:280.33px;top:750.80px;font-size:15px;letter-spacing:-0.184px">_dl_name_match_p</div>
<div class="t" style="left:463.19px;top:750.80px;font-size:15px;letter-spacing:-0.128px">ld-2.24.so: dl-misc.c</div>
<div class="t" style="left:69.90px;top:769.98px;font-size:14.5px;letter-spacing:0.150px">0.00</div>
<div class="t" style="left:137.90px;top:769.98px;font-size:14.5px;letter-spacing:0.150px">0.00</div>
<div class="t" style="left:248.64px;top:769.98px;font-size:14.5px;letter-spacing:0.150px">2</div>
<div class="sq" style="left:263px;top:775px;background:#75cbcb"></div>
<div class="t" style="left:280.33px;top:769.80px;font-size:15px;letter-spacing:0.145px">_dl_map_object_from_fd</div>
<div class="t" style="left:463.19px;top:769.80px;font-size:15px;letter-spacing:0.063px">ld-2.24.so: dl-load.c, dl-fileid.h, dl-…</div>
<div class="t" style="left:69.90px;top:788.98px;font-size:14.5px;letter-spacing:0.150px">0.00</div>
<div class="t" style="left:137.90px;top:788.98px;font-size:14.5px;letter-spacing:0.150px">0.00</div>
<div class="t" style="left:248.64px;top:788.98px;font-size:14.5px;letter-spacing:0.150px">1</div>
<div class="sq" style="left:263px;top:794px;background:#27c22b"></div>
<div class="t" style="left:279.06px;top:788.80px;font-size:15px;letter-spacing:0.135px">handle_ld_preload</div>
<div class="t" style="left:463.19px;top:788.80px;font-size:15px;letter-spacing:0.035px">ld-2.24.so: rtld.c</div>
<div class="abs" style="left:715px;top:137px;width:13px;height:673px;border:1px solid #bab8b4;border-right-color:#c9c7c3;border-radius:7px;background:#f5f4f3"></div>
<div class="abs" style="left:716px;top:360px;width:11px;height:437px;background:#dcdbd9;border-radius:0 0 6px 6px"></div>
<div class="abs" style="left:715px;top:150px;width:13px;height:217px;border:1px solid #aeaca8;border-radius:7px;background:linear-gradient(90deg,#fcfcfc,#ebebe9)"></div>
<svg style="left:715px;top:137px" width="14" height="673"><path d="M4.8 8.6 L6.8 6.6 L8.8 8.6" stroke="#9a9a9a" fill="none"/><g stroke="#b4b2ae"><path d="M4.5 117.5 H9.5 M4.5 119.5 H9.5 M4.5 121.5 H9.5"/></g><path d="M4.3 663.4 H9.7 L7 666.4 Z" fill="#666"/></svg>
<svg style="left:730px;top:440px" width="8" height="8"><g stroke="#d0ceca"><path d="M1 1.5 H7 M1 3.5 H7 M1 5.5 H7"/></g></svg>
<div class="t" style="left:744.14px;top:81.03px;font-size:15.5px;letter-spacing:-0.305px;font-weight:bold">fibonacci(int)</div>
<div class="abs" style="left:743px;top:134px;width:546px;height:644px;border:1px solid #cbc9c5;border-radius:3px;background:#f2f1f0"></div>
<div class="tab" style="left:743.5px;top:109px;width:56px;height:25px"></div>
<div class="t" style="left:751.66px;top:110.80px;font-size:15px;letter-spacing:-0.642px">Types</div>
<div class="abs" style="left:752.0px;top:129px;width:8.9px;height:1px;background:#464646"></div>
<div class="tab" style="left:862px;top:109px;width:83.5px;height:25px"></div>
<div class="t" style="left:871.37px;top:110.80px;font-size:15px;letter-spacing:-0.204px">All Callers</div>
<div class="abs" style="left:884.6px;top:129px;width:3.0px;height:1px;background:#464646"></div>
<div class="tab" style="left:945.5px;top:109px;width:92px;height:25px"></div>
<div class="t" style="left:954.74px;top:110.80px;font-size:15px;letter-spacing:-0.187px">Callee Map</div>
<div class="tab" style="left:1037.5px;top:109px;width:102px;height:25px"></div>
<div class="t" style="left:1046.72px;top:110.80px;font-size:15px;letter-spacing:-0.321px">Source Code</div>
<div class="abs" style="left:1056.7px;top:129px;width:8.0px;height:1px;background:#464646"></div>
<div class="tab" style="left:799px;top:105px;width:63px;height:30px;background:linear-gradient(#fdfdfd,#f5f4f3);border-color:#bdbbb7"></div>
<div class="t" style="left:807.94px;top:109.80px;font-size:15px;letter-spacing:-0.296px">Callers</div>
<div class="frame" style="left:745px;top:136px;width:542px;height:316px"></div>
<div class="hdr" style="left:746px;top:137px;width:540px;height:25px;border-radius:2px 2px 0 0"></div>
<div class="sep" style="left:813px;top:137px;height:24px"></div>
<div class="sep" style="left:915px;top:137px;height:24px"></div>
<div class="sep" style="left:972px;top:137px;height:24px"></div>
<div class="t" style="left:749.62px;top:139.80px;font-size:15px;letter-spacing:0.271px">Ir</div>
<div class="t" style="left:817.72px;top:139.80px;font-size:15px;letter-spacing:0.120px">Ir per call</div>
<div class="t" style="left:920.54px;top:139.80px;font-size:15px;letter-spacing:-0.064px">Count</div>
<div class="t" style="left:977.54px;top:139.80px;font-size:15px;letter-spacing:-0.213px">Caller</div>
<div class="bar" style="left:749px;top:166px;width:16px"></div>
<div class="t" style="left:774.06px;top:160.98px;font-size:14.5px;letter-spacing:0.015px">64.25</div>
<div class="t" style="left:818.36px;top:160.98px;font-size:14.5px;letter-spacing:0.079px">6 165 553 363</div>
<div class="t" style="left:959.64px;top:160.98px;font-size:14.5px;letter-spacing:0.500px">1</div>
<div class="sq" style="left:976px;top:166px;background:#c7a650"></div>
<div class="t" style="left:992.20px;top:160.80px;font-size:15px;letter-spacing:0.345px">main (profiling_test)</div>
<div class="frame" style="left:745px;top:460px;width:542px;height:317px"></div>
<div class="hdr" style="left:746px;top:461px;width:540px;height:25px;border-radius:2px 2px 0 0"></div>
<div class="sep" style="left:813px;top:461px;height:24px"></div>
<div class="sep" style="left:915px;top:461px;height:24px"></div>
<div class="sep" style="left:972px;top:461px;height:24px"></div>
<div class="t" style="left:749.62px;top:464.80px;font-size:15px;letter-spacing:0.271px">Ir</div>
<div class="t" style="left:817.72px;top:464.80px;font-size:15px;letter-spacing:0.120px">Ir per call</div>
<div class="t" style="left:920.54px;top:464.80px;font-size:15px;letter-spacing:-0.064px">Count</div>
<div class="t" style="left:977.54px;top:464.80px;font-size:15px;letter-spacing:-0.499px">Callee</div>
<div class="bar" style="left:749px;top:491px;width:16px"></div>
<div class="t" style="left:774.06px;top:485.98px;font-size:14.5px;letter-spacing:0.015px">64.25</div>
<div class="t" style="left:818.55px;top:485.98px;font-size:14.5px;letter-spacing:0.058px">3 082 776 670</div>
<div class="t" style="left:960.87px;top:485.98px;font-size:14.5px;letter-spacing:0.500px">2</div>
<div class="sq" style="left:976px;top:491px;background:#82c96c"></div>
<div class="t" style="left:992.99px;top:485.80px;font-size:15px;letter-spacing:0.337px">fibonacci(int)'2 (profiling_test)</div>
<svg style="left:1012px;top:452px" width="8" height="8"><g stroke="#d0ceca"><path d="M1.5 1 V7 M3.5 1 V7 M5.5 1 V7"/></g></svg>
<div class="tabb" style="left:744px;top:778px;width:51.5px;height:26px"></div>
<div class="t" style="left:751.37px;top:781.00px;font-size:15px;letter-spacing:-0.084px;color:#a9a7a3">Parts</div>
<div class="abs" style="left:769.8px;top:799px;width:4.7px;height:1px;background:#a9a7a3"></div>
<div class="tabb" style="left:859.5px;top:778px;width:85px;height:26px"></div>
<div class="t" style="left:867.94px;top:781.00px;font-size:15px;letter-spacing:-0.318px">Call Graph</div>
<div class="tabb" style="left:944.5px;top:778px;width:86.9px;height:26px"></div>
<div class="t" style="left:954.47px;top:781.00px;font-size:15px;letter-spacing:-0.239px">All Callees</div>
<div class="abs" style="left:954.8px;top:799px;width:9.7px;height:1px;background:#464646"></div>
<div class="tabb" style="left:1031.4px;top:778px;width:88.7px;height:26px"></div>
<div class="t" style="left:1040.34px;top:781.00px;font-size:15px;letter-spacing:-0.070px">Caller Map</div>
<div class="tabb" style="left:1120.1px;top:778px;width:112.4px;height:26px"></div>
<div class="t" style="left:1128.57px;top:781.00px;font-size:15px;letter-spacing:-0.093px">Machine Code</div>
<div class="abs" style="left:1128.9px;top:799px;width:12.2px;height:1px;background:#464646"></div>
<div class="tabb" style="left:796px;top:777px;width:63.7px;height:30px;background:linear-gradient(#f5f4f3,#fcfcfc);border-color:#bdbbb7"></div>
<div class="t" style="left:803.44px;top:781.60px;font-size:15px;letter-spacing:-0.403px">Callees</div>
<div class="abs" style="left:803.7px;top:800px;width:10.5px;height:1px;background:#464646"></div>
<div class="abs" style="left:13px;top:813px;width:1282px;height:1px;background:#e2e0dc"></div>
<div class="t" style="left:15.86px;top:814.80px;font-size:15px;letter-spacing:0.065px">callgrind.out [1] - Total Instruction Fetch Cost: 9 595 711 289</div>
</body></html>
